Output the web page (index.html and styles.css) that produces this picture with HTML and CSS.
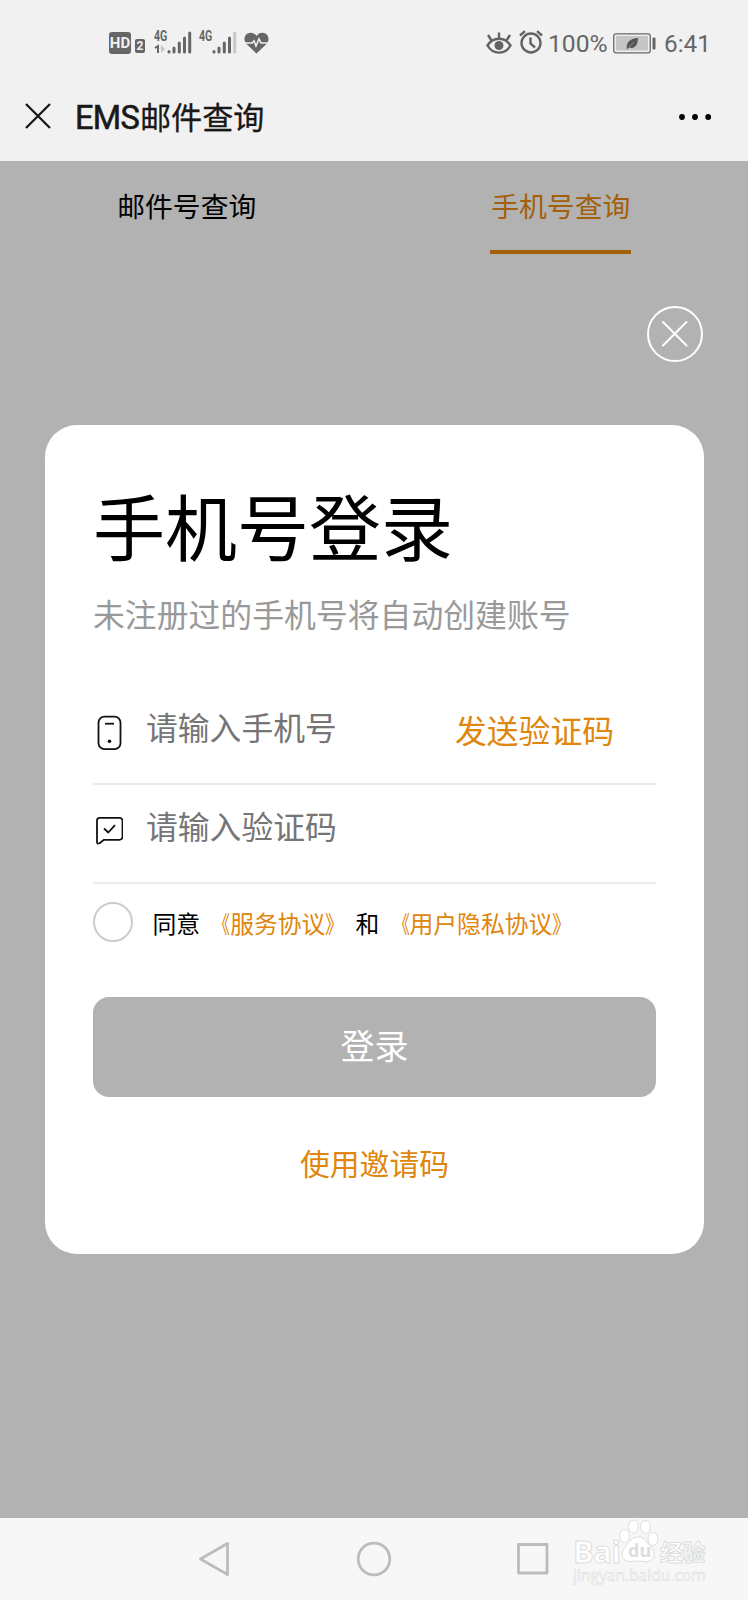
FILE: index.html
```html
<!DOCTYPE html>
<html lang="zh-CN">
<head>
<meta charset="utf-8">
<title>EMS邮件查询</title>
<link rel="stylesheet" href="styles.css">
</head>
<body>
<div class="screen">
  <header class="top">
    <div class="status">
      <div class="status-left">
        <span class="hd">HD</span><span class="sim">2</span>
        <span class="signal">
          <span class="net">4G</span>
          <svg width="38" height="25" viewBox="0 0 38 25"><path d="M1 18l3-2v7" fill="none" stroke="#666" stroke-width="2"/><path d="M7 15l4 4-4 4z" fill="#c4c4c4"/><g stroke="#666" stroke-width="3" stroke-linecap="round"><path d="M15 22v-.5M20 22v-4M25.300 22v-9M30.500 22V8M35.700 22V3"/></g></svg>
        </span>
        <span class="signal second">
          <span class="net">4G</span>
          <svg width="38" height="25" viewBox="0 0 38 25"><g stroke="#666" stroke-width="3" stroke-linecap="round"><path d="M15 22v-.5M20 22v-4M25.300 22v-9M30.500 22V8"/><path stroke="#c8c8c8" d="M35.700 22V3"/></g></svg>
        </span>
        <svg class="heart" width="25" height="22" viewBox="0 0 25 22"><path fill="#666" d="M12.500 21.500L2.500 12C-.8 8.500.2 3.500 3.500 1.500 6.800-.3 10.500.8 12.500 4c2-3.200 5.700-4.300 9-2.500 3.300 2 4.300 7 1 10.500z"/><path fill="none" stroke="#f1f1f1" stroke-width="1.600" d="M0 11h8l2-2 2 5 3-7 2 4h8"/></svg>
      </div>
      <div class="status-right">
        <svg width="26" height="23" viewBox="0 0 26 23"><g fill="none" stroke="#636363" stroke-width="2.400"><path d="M1.500 13.500C7 4.500 19 4.500 24.500 13.500 19 23 7 23 1.500 13.500zM13 6.500V.5M5.500 8.500L2 3M20.500 8.500L24 3"/></g><circle cx="13" cy="13.500" r="4.500" fill="#636363"/></svg>
        <svg class="alarm" width="24" height="24" viewBox="0 0 24 24"><g fill="none" stroke="#636363" stroke-width="2.400"><circle cx="12" cy="13" r="9.500"/><path d="M11.500 7.500v6l4.500 4M1 5.500L6 1.200M23 5.500L18 1.200"/></g></svg>
        <span class="pct">100%</span>
        <svg class="battery" width="43" height="21" viewBox="0 0 43 21"><rect x=".8" y=".8" width="36.400" height="19" rx="2" fill="#f1f1f1" stroke="#666" stroke-width="1.300"/><rect x="3" y="3" width="32" height="14.600" fill="#c5c5c5"/><rect x="39.500" y="4.500" width="3" height="12" rx="1" fill="#666"/><path fill="#555" d="M14 16.500c-1.500-7 3-11 11-11.500 0 7-3.500 11.500-9 9.500z"/><path d="M16 14l5-5" stroke="#999" stroke-width=".8"/></svg>
        <span class="clock">6:41</span>
      </div>
    </div>
    <div class="titlebar">
      <svg width="26" height="26" viewBox="0 0 26 26"><path d="M1 1l24 24M25 1L1 25" stroke="#191919" stroke-width="2.300"/></svg>
      <h1 class="page-title"><span class="latin">EMS</span>邮件查询</h1>
      <svg class="more" width="34" height="8" viewBox="0 0 34 8"><circle cx="4" cy="4" r="2.900"/><circle cx="17" cy="4" r="2.900"/><circle cx="30.200" cy="4" r="2.900"/></svg>
    </div>
  </header>
  <main class="content">
    <nav class="tabs">
      <span class="tab">邮件号查询</span>
      <span class="tab active">手机号查询</span>
    </nav>
    <div class="close-row">
      <svg width="56" height="56" viewBox="0 0 56 56" fill="none" stroke="#fff" stroke-linecap="round"><circle cx="28" cy="28" r="27" stroke-width="2"/><path d="M16 16l23.500 23.500M39.500 16L16 39.500" stroke-width="2"/></svg>
    </div>
    <section class="card">
      <h2 class="card-title">手机号登录</h2>
      <p class="hint">未注册过的手机号将自动创建账号</p>
      <div class="field">
        <svg class="field-icon phone" width="30" height="36" viewBox="0 0 30 36" fill="none" stroke="#111"><rect x="5.500" y="1.700" width="22" height="32.500" rx="6" stroke-width="1.800"/><path d="M12 8.700h9" stroke-width="1.800"/><circle cx="16.500" cy="26.300" r="1.800" fill="#111" stroke="none"/></svg>
        <span class="placeholder">请输入手机号</span>
        <span class="send">发送验证码</span>
      </div>
      <div class="field">
        <svg class="field-icon" width="30" height="30" viewBox="0 0 30 30" fill="none" stroke="#111" stroke-width="1.800" stroke-linejoin="round"><path d="M6.500 1.800h20a3 3 0 0 1 3 3v16a3 3 0 0 1-3 3H11l-4.500 3.500Q4 28.500 4 26V4.500Q4 1.800 6.500 1.800z"/><path d="M11 12.500l4.300 4 6.700-7.300"/></svg>
        <span class="placeholder">请输入验证码</span>
      </div>
      <div class="agree">
        <span class="check"></span>
        <span>同意</span><span class="link"><span class="open">《</span>服务协议<span class="shut">》</span></span><span>和</span><span class="link"><span class="open">《</span>用户隐私协议<span class="shut">》</span></span>
      </div>
      <div class="login">登录</div>
      <div class="invite">使用邀请码</div>
    </section>
  </main>
  <footer class="navbar">
    <svg class="keys" width="360" height="36" viewBox="0 0 360 36" fill="none" stroke="#bcbcbc" stroke-width="2.800" stroke-linejoin="round"><path d="M3.500 18L30.500 2.500v31z"/><circle cx="177" cy="18" r="15.800"/><rect x="321.500" y="3.500" width="28.500" height="28.500"/></svg>
    <div class="watermark">
      <div class="brand">
        <span class="outlined">Bai</span>
        <span class="paw"><svg width="40" height="44" viewBox="0 0 40 44" fill="#fff" stroke="#ddd"><ellipse cx="5.500" cy="17" rx="5" ry="6.500"/><ellipse cx="14.500" cy="7.500" rx="5" ry="6.500"/><ellipse cx="26.500" cy="8" rx="5" ry="6.500"/><ellipse cx="34" cy="20" rx="5" ry="6.500"/><path d="M19 18c7 0 8 5 12 9 8 8 3 17-6 15.500-4-.7-8-.7-12 0C4 44-1 35 7 27c4-4 5-9 12-9z"/></svg><span class="du">du</span></span>
        <span class="outlined cn">经验</span>
      </div>
      <div class="site">jingyan.baidu.com</div>
    </div>
  </footer>
</div>
</body>
</html>
```
FILE: styles.css
```css
* { box-sizing: border-box; }
body { margin: 0; font-family: Roboto, "Noto Sans CJK SC", sans-serif; color: #000; }
h1, h2, p { margin: 0; font-weight: 400; }
svg { display: block; flex: none; }
.screen { width: 748px; height: 1600px; display: flex; flex-direction: column; background: #b2b2b2; overflow: hidden; white-space: nowrap; }

.top { height: 161px; background: #f1f1f1; flex: none; }
.status { height: 86px; padding: 0 37px 0 109px; display: flex; align-items: center; justify-content: space-between; color: #666; }
.status-left, .status-right { display: flex; align-items: center; }
.hd { width: 22px; height: 22px; border-radius: 3px; background: #666; color: #f1f1f1; font-size: 15px; font-weight: 700; line-height: 22px; text-align: center; }
.sim { width: 10px; height: 14px; margin: 5px 0 0 4px; border-radius: 2px; background: #666; color: #f1f1f1; font-size: 12px; font-weight: 700; line-height: 14px; text-align: center; }
.signal { position: relative; margin: 0 0 2px 9px; }
.signal.second { margin-left: 7px; }
.net { position: absolute; left: 0; top: 0; font-size: 14px; line-height: 12px; font-weight: 700; transform: scaleX(.76); transform-origin: left; }
.heart { margin: 0 0 0 7px; }
.alarm { margin: 0 5px 3px 7px; }
.pct { font-size: 24.700px; width: 59px; padding-top: 1px; }
.battery { margin: 0 8px 0 6px; }
.clock { font-size: 24.300px; width: 47px; padding-top: 1px; }
.titlebar { height: 60px; padding: 0 36px 0 25px; display: flex; align-items: center; }
.page-title { margin: 4px 0 0 24px; font-size: 31.100px; line-height: 44px; color: #191919; flex: 1; -webkit-text-stroke: .3px #191919; }
.latin { display: inline-block; width: 65px; font-size: 32.500px; letter-spacing: -.7px; -webkit-text-stroke-width: .6px; }
.more { margin-top: 2px; }

.content { flex: 1; }
.tabs { display: flex; height: 93px; padding-top: 1px; }
.tab { flex: 1; display: flex; justify-content: center; font-size: 27.800px; line-height: 92px; }
.tab.active { color: #a45f0a; padding-left: 1px; }
.tab.active::after { content: ""; width: 141px; height: 4px; margin: 88px 0 0 -140px; background: #a45f0a; }
.close-row { display: flex; justify-content: flex-end; padding: 52px 45px 0 0; }
.card { width: 659px; height: 829px; margin: 63px auto 0 45px; padding: 54px 48px 0; border-radius: 32px; background: #fff; }
.card-title { font-size: 72px; line-height: 104px; }
.hint { height: 95px; margin-top: 8px; font-size: 31.850px; line-height: 50px; color: #999; }
.field { height: 99px; display: flex; align-items: center; border-bottom: 2px solid #ebebeb; }
.field-icon { margin-top: -6px; }
.phone { margin-top: -4px; }
.placeholder { margin: -12px 0 0 23px; width: 309px; font-size: 31.800px; line-height: 48px; color: #757575; }
.send { margin-top: -5px; font-size: 31.800px; line-height: 48px; color: #df860d; }
.agree { display: flex; align-items: center; gap: 6.400px; height: 75px; font-size: 23.800px; }
.agree > span:not(.check) { padding-top: 1px; }
.check { width: 40px; height: 40px; border: 2px solid #ccc; border-radius: 50%; margin-right: 13px; }
.link, .invite { color: #df860d; }
.open, .shut { display: inline-block; transform: scaleX(.7); transform-origin: right; }
.shut { transform: scaleX(.8); transform-origin: left; }
.login { height: 100px; margin-top: 38px; border-radius: 16px; background: #b2b2b2; color: #fff; font-size: 34px; line-height: 101px; text-align: center; }
.invite { margin-top: 43px; font-size: 29.800px; line-height: 49px; text-align: center; }

.navbar { height: 82px; flex: none; display: flex; align-items: center; padding-left: 197px; background: #f7f7f7; }
.watermark { margin: -15px 0 0 16px; width: 140px; }
.brand { display: flex; align-items: flex-end; height: 46px; }
.outlined { font: 700 31px/27px "Open Sans", sans-serif; color: #fff; -webkit-text-stroke: 1px #ddd; width: 46px; letter-spacing: -.5px; }
.outlined.cn { font: 700 23px/28px "Noto Sans CJK SC", sans-serif; margin-left: 1px; }
.paw { position: relative; width: 40px; margin-bottom: 2px; }
.du { position: absolute; left: 9px; bottom: 3px; font: 700 18px/20px "Open Sans", sans-serif; color: #ddd; }
.site { font: 15.600px/20px "Open Sans", sans-serif; color: #fff; -webkit-text-stroke: .6px #ddd; }
```
